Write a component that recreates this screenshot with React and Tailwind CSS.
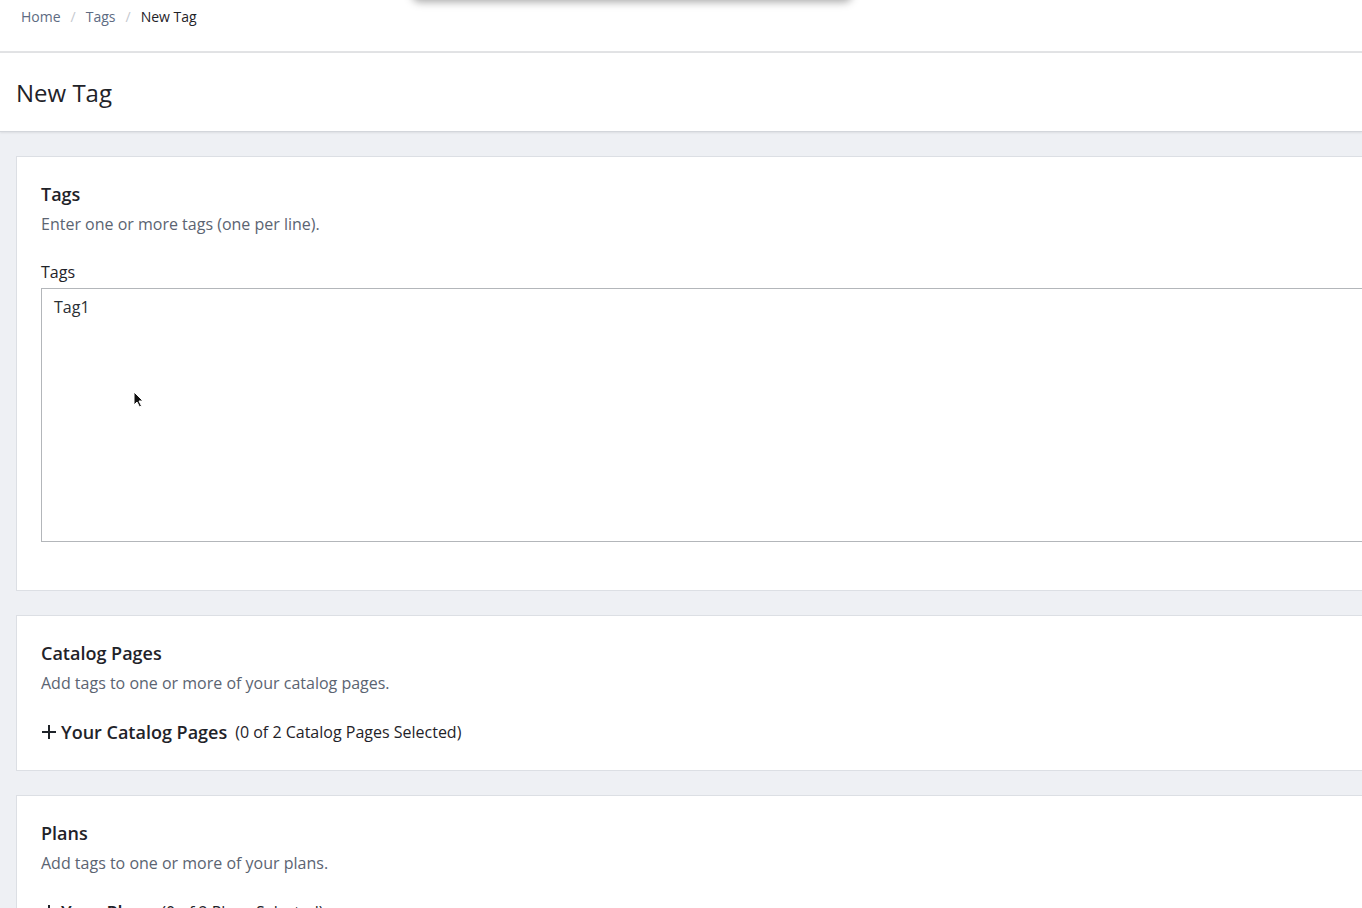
export default function App() {
  const sections = [
    {
      title: 'Catalog Pages',
      desc: 'Add tags to one or more of your catalog pages.',
      picker: 'Your Catalog Pages',
      count: '(0 of 2 Catalog Pages Selected)',
    },
    {
      title: 'Plans',
      desc: 'Add tags to one or more of your plans.',
      picker: 'Your Plans',
      count: '(0 of 2 Plans Selected)',
    },
  ];

  return (
    <div
      className="relative w-[1362px] h-[908px] overflow-hidden bg-[#eef0f4] text-[#212529]"
      style={{ fontFamily: '"Open Sans", "Noto Sans", sans-serif' }}
    >
      {/* shadow of a menu that sits above the viewport */}
      <div className="absolute left-[412px] top-[-40px] w-[440px] h-[40px] bg-white rounded-lg shadow-[0_2px_8px_rgba(0,0,0,0.35)] z-10" />

      {/* breadcrumb */}
      <div className="h-[53px] bg-white border-b-2 border-[#e2e3e5] pl-[21px] pt-[7px]">
        <nav className="flex items-center text-[14px] leading-5">
          <span className="text-[#5d6b82]">Home</span>
          <span className="mx-[10px] text-[#c5c9cf]">/</span>
          <span className="text-[#5d6b82]">Tags</span>
          <span className="mx-[10px] text-[#c5c9cf]">/</span>
          <span className="text-[#1f2329]">New Tag</span>
        </nav>
      </div>

      {/* title */}
      <div className="h-[79px] bg-white border-b border-[#d3d6db] shadow-[0_1px_2px_rgba(0,0,0,0.08)] pl-4 pt-6">
        <h1 className="text-[24px] leading-8 text-[#1f2329]">New Tag</h1>
      </div>

      <div className="pl-4 pt-6 flex flex-col gap-6">
        <div className="w-[1420px] bg-white border border-[#dcdfe4] pl-6 pt-[25px] pb-12">
          <h2 className="text-[18px] leading-6 font-semibold text-[#1f2329]">Tags</h2>
          <p className="mt-[6px] text-[16px] leading-6 text-[#5b6472]">Enter one or more tags (one per line).</p>
          <label className="block mt-6 text-[16px] leading-6 text-[#1f2329]">Tags</label>
          <div className="mt-1 h-[254px] border border-[#b3b6ba] pl-3 pt-[6px] text-[16px] leading-6 text-[#2b2f35]">
            Tag1
          </div>
        </div>

        {sections.map((s) => (
          <div key={s.title} className="w-[1420px] bg-white border border-[#dcdfe4] pl-6 pt-[25px] pb-[26px]">
            <h2 className="text-[18px] leading-6 font-semibold text-[#1f2329]">{s.title}</h2>
            <p className="mt-[6px] text-[16px] leading-6 text-[#5b6472]">{s.desc}</p>
            <div className="mt-[25px] flex items-center">
              <svg width="16" height="16" viewBox="0 0 16 16" className="mr-[4px]">
                <path d="M8 1v14M1 8h14" stroke="#1f2329" strokeWidth="2" fill="none" />
              </svg>
              <span className="text-[18px] leading-6 font-semibold text-[#1f2329]">{s.picker}</span>
              <span className="ml-2 text-[16px] leading-6 text-[#1f2329]">{s.count}</span>
            </div>
          </div>
        ))}
      </div>

      {/* mouse pointer */}
      <svg className="absolute left-[133px] top-[391px]" width="12" height="18" viewBox="0 0 12 18">
        <path d="M1 1v13l3-3 2.5 5 2-1-2.5-5H10z" fill="#111" stroke="#fff" strokeWidth="1" />
      </svg>
    </div>
  );
}
